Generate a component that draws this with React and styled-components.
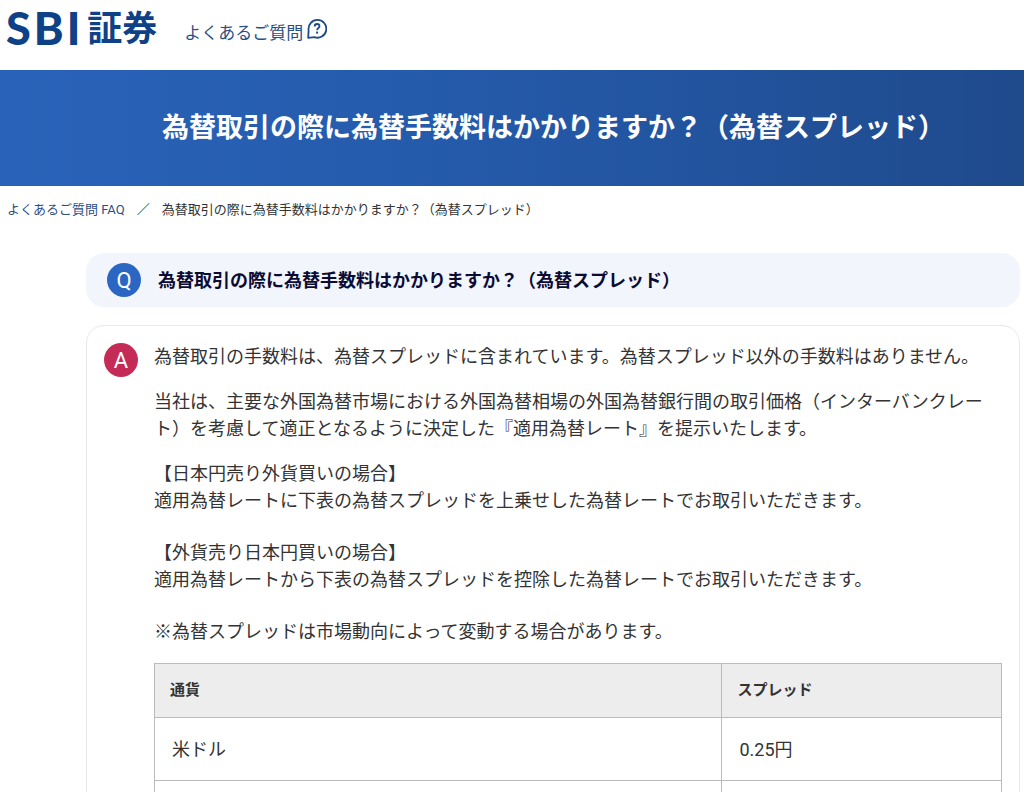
import React from "react";
import styled, { createGlobalStyle } from "styled-components";

const GlobalStyle = createGlobalStyle`
	* {
		box-sizing: border-box;
	}
	body {
		margin: 0;
		background-color: #fff;
		color: #333;
		font-family: Roboto, "Noto Sans CJK JP", sans-serif;
		font-size: 18px;
		line-height: 27px;
	}
`;

const Page = styled.div`
	height: 100vh;
	overflow: hidden;
`;
const Header = styled.header`
	display: flex;
	align-items: center;
	gap: 27px;
	height: 70px;
	padding: 0 6px 12px;
`;
const Logo = styled.a`
	display: flex;
	align-items: center;
	gap: 3px;
	color: #0f4186;
	text-decoration: none;
`;
const LogoLatin = styled.span`
	padding-bottom: 2px;
	font-family: Lato, sans-serif;
	font-size: 45px;
	font-weight: 900;
	line-height: 54px;
`;
const LogoKanji = styled.span`
	margin-left: 4px;
	padding-top: 2px;
	font-size: 35px;
	font-weight: 700;
	line-height: 58px;
`;
const HelpLink = styled.a`
	display: flex;
	align-items: center;
	gap: 4px;
	padding-top: 8px;
	color: #2a4f86;
	font-size: 17px;
	text-decoration: none;
	svg {
		margin-bottom: 8px;
	}
`;
const Banner = styled.div`
	display: flex;
	align-items: center;
	justify-content: center;
	height: 116px;
	padding-left: 83px;
	background: linear-gradient(90deg, #2963b9, #2459a8 50%, #1f4a8c);
`;
const Title = styled.h1`
	margin: 0;
	color: #fff;
	font-size: 27px;
	font-weight: 700;
	line-height: 40px;
	white-space: nowrap;
`;
const Breadcrumb = styled.nav`
	display: flex;
	gap: 12px;
	padding: 10px 7px 0;
	font-size: 13px;
	a {
		color: #2a4f86;
		text-decoration: none;
	}
`;
const Main = styled.main`
	display: flex;
	flex-direction: column;
	gap: 18px;
	padding: 30px 4px 0 86px;
`;
const Question = styled.section`
	display: flex;
	align-items: center;
	gap: 17px;
	min-height: 54px;
	padding: 0 21px;
	border-radius: 18px;
	background-color: #f2f5fb;
`;
const QuestionTitle = styled.h2`
	margin: 0;
	color: #0b0b33;
	font-size: 18px;
	font-weight: 700;
`;
const Answer = styled.section`
	display: flex;
	align-items: flex-start;
	gap: 16px;
	padding: 17px;
	border: 1px solid #e6e8ec;
	border-radius: 18px;
`;
const Badge = styled.span`
	display: flex;
	flex: none;
	align-items: center;
	justify-content: center;
	width: 34px;
	height: 34px;
	border-radius: 50%;
	background-color: ${props => (props.$answer ? "#c42c57" : "#2b66c2")};
	color: #fff;
	font-size: 22px;
`;
const AnswerBody = styled.div`
	flex: 1;
`;
const Text = styled.p`
	margin: 0 0 ${props => (props.$wide ? "25px" : "18px")};
`;
const Table = styled.table`
	width: 100%;
	border-collapse: collapse;
	table-layout: fixed;
	th,
	td {
		border: 1px solid #bbb;
		text-align: left;
	}
	th {
		height: 54px;
		padding: 0 15px;
		background-color: #ededed;
		font-size: 15px;
		font-weight: 700;
	}
	th:first-child {
		width: 67%;
	}
	td {
		height: 63px;
		padding: 0 17px;
	}
`;

const HelpIcon = () => (
	<svg width="20" height="20" viewBox="0 0 20 20" fill="none" stroke="#1f4a86" strokeWidth="1.8" aria-hidden="true">
		<path d="M1.2 18.8l.4-7.8a8.9 8.9 0 1 1 5.8 7.2z" strokeLinejoin="round" />
		<path d="M7.7 7.4c0-1.5 1-2.4 2.4-2.4s2.4.9 2.4 2.2c0 1.8-2.4 1.9-2.4 4" />
		<path d="M10.1 12.6v2" strokeWidth="2" />
	</svg>
);

const title = "為替取引の際に為替手数料はかかりますか？（為替スプレッド）";
const spreads = [["米ドル", "0.25円"], ["", ""]];

const App = () => {
	return (
		<Page lang="ja">
			<GlobalStyle />
			<Header>
				<Logo href="#">
					<LogoLatin>S</LogoLatin>
					<LogoLatin>B</LogoLatin>
					<LogoLatin>I</LogoLatin>
					<LogoKanji>証券</LogoKanji>
				</Logo>
				<HelpLink href="#">
					よくあるご質問
					<HelpIcon />
				</HelpLink>
			</Header>
			<Banner>
				<Title>{title}</Title>
			</Banner>
			<Breadcrumb>
				<a href="#">よくあるご質問 FAQ</a>
				<span>／</span>
				<span>{title}</span>
			</Breadcrumb>
			<Main>
				<Question>
					<Badge>Q</Badge>
					<QuestionTitle>{title}</QuestionTitle>
				</Question>
				<Answer>
					<Badge $answer>A</Badge>
					<AnswerBody>
						<Text>
							為替取引の手数料は、為替スプレッドに含まれています。為替スプレッド以外の手数料はありません。
						</Text>
						<Text>
							当社は、主要な外国為替市場における外国為替相場の外国為替銀行間の取引価格（インターバンクレート）を考慮して適正となるように決定した『適用為替レート』を提示いたします。
						</Text>
						<Text $wide>
							【日本円売り外貨買いの場合】
							<br />
							適用為替レートに下表の為替スプレッドを上乗せした為替レートでお取引いただきます。
						</Text>
						<Text $wide>
							【外貨売り日本円買いの場合】
							<br />
							適用為替レートから下表の為替スプレッドを控除した為替レートでお取引いただきます。
						</Text>
						<Text>※為替スプレッドは市場動向によって変動する場合があります。</Text>
						<Table>
							<thead>
								<tr>
									<th scope="col">通貨</th>
									<th scope="col">スプレッド</th>
								</tr>
							</thead>
							<tbody>
								{spreads.map(([currency, spread], index) => (
									<tr key={index}>
										<td>{currency}</td>
										<td>{spread}</td>
									</tr>
								))}
							</tbody>
						</Table>
					</AnswerBody>
				</Answer>
			</Main>
		</Page>
	);
};

export default App;
